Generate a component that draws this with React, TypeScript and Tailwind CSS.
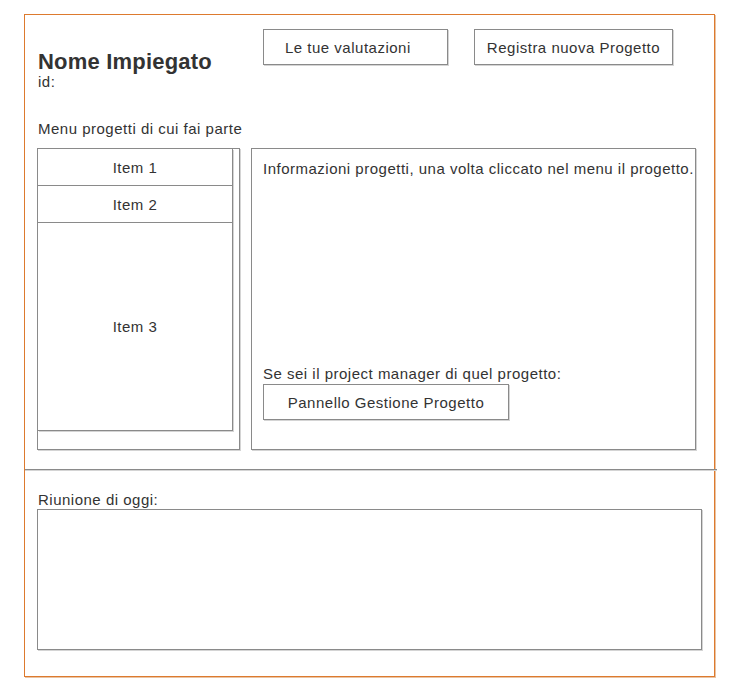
import React from "react";

const box = "border border-[#8a8a8a] shadow-[1px_1px_0_#d4d4d4] bg-white";

export default function App() {
  return (
    <div
      className="min-h-[688px] w-[738px] bg-white text-[#333333] tracking-[0.5px]"
      style={{ fontFamily: '"Liberation Sans", Arial, sans-serif' }}
    >
      <div className="ml-[24px] mt-[14px] flex h-[663px] w-[691px] flex-col border border-[#dd7a2e] shadow-[1px_1px_0_#e9c4a4]">
        {/* top section */}
        <div className="flex h-[454px] flex-col pl-[12px] pt-[14px]">
          <div className="flex items-start">
            <div className="w-[226px] pl-[1px] pt-[22px]">
              <div className="text-[22px] font-bold leading-[22px] tracking-[0.2px]">Nome Impiegato</div>
              <div className="text-[15px] leading-[17px]">id:</div>
            </div>
            <button
              className={`${box} flex h-[36px] w-[185px] items-center pl-[21px] text-left text-[15px] leading-[17px] tracking-[0.5px] text-[#333333]`}
            >
              Le tue valutazioni
            </button>
            <button
              className={`${box} ml-[26px] flex h-[36px] w-[199px] items-center justify-center text-[15px] leading-[17px] tracking-[0.5px] text-[#333333]`}
            >
              Registra nuova Progetto
            </button>
          </div>
          <div className="mt-[30px] pl-[1px] text-[15px] leading-[17px]">Menu progetti di cui fai parte</div>
          <div className="mt-[11px] flex">
            <div className={`${box} flex h-[302px] w-[203px] flex-col`}>
              <div className="flex w-[195px] flex-col border-b border-r border-[#8a8a8a] shadow-[1px_1px_0_#d4d4d4]">
                <div className="flex h-[37px] items-center justify-center border-b border-[#8a8a8a] text-[15px] leading-[17px]">
                  Item 1
                </div>
                <div className="flex h-[37px] items-center justify-center border-b border-[#8a8a8a] text-[15px] leading-[17px]">
                  Item 2
                </div>
                <div className="flex h-[207px] items-center justify-center text-[15px] leading-[17px]">
                  Item 3
                </div>
              </div>
            </div>
            <div className={`${box} ml-[11px] flex h-[302px] w-[445px] flex-col pb-[29px] pl-[11px] pt-[11px]`}>
              <div className="whitespace-nowrap text-[15px] leading-[17px]">
                Informazioni progetti, una volta cliccato nel menu il progetto.
              </div>
              <div className="mt-auto flex flex-col">
                <div className="text-[15px] leading-[17px]">Se sei il project manager di quel progetto:</div>
                <button
                  className={`${box} mt-[2px] flex h-[36px] w-[246px] items-center justify-center text-[15px] leading-[17px] tracking-[0.5px] text-[#333333]`}
                >
                  Pannello Gestione Progetto
                </button>
              </div>
            </div>
          </div>
        </div>
        {/* divider */}
        <div className="-mr-[3px] h-[1px] bg-[#8a8a8a] shadow-[0_1px_0_#d4d4d4]" />
        {/* bottom section */}
        <div className="flex flex-col pl-[12px]">
          <div className="mt-[21px] pl-[1px] text-[15px] leading-[17px]">Riunione di oggi:</div>
          <div className={`${box} mt-[1px] h-[141px] w-[665px]`} />
        </div>
      </div>
    </div>
  );
}
